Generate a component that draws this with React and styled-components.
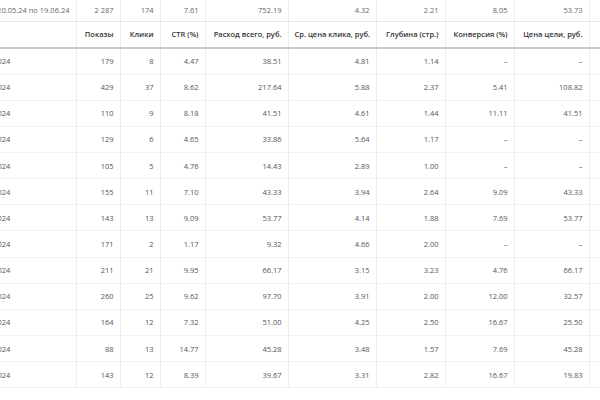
import React from "react";
import styled, { createGlobalStyle } from "styled-components";

const Global = createGlobalStyle`
  html, body { margin: 0; padding: 0; background: #fff; }
  body { font-family: "Open Sans", "Noto Sans", sans-serif; }
`;

const Viewport = styled.div`
  width: 600px;
  height: 400px;
  overflow: hidden;
  background: #fff;
`;

const Table = styled.table`
  border-collapse: collapse;
  table-layout: fixed;
  margin-left: -36px;
  width: 725px;
  font-size: 7.5px;
  color: #555;
`;

const Col = styled.col`
  width: ${(p) => p.$w}px;
`;

const Cell = styled.td`
  padding: 0 6px 0 ${(p) => (p.$left ? "8px" : "6px")};
  text-align: ${(p) => (p.$left ? "left" : "right")};
  border-right: 1px solid #efefef;
  border-bottom: 1px solid #f2f2f2;
  white-space: nowrap;
  overflow: hidden;
`;

const TotalRow = styled.tr`
  height: 21px;
  td { border-bottom: 1px solid #e6e6e6; color: #666; }
`;

const HeadRow = styled.tr`
  height: 27px;
`;

const HeadCell = styled.th`
  padding: 0 6px 0 ${(p) => (p.$left ? "8px" : "6px")};
  text-align: ${(p) => (p.$left ? "left" : "right")};
  font-weight: 600;
  color: #333;
  border-right: 1px solid #efefef;
  border-bottom: 2px solid #c8c8c8;
  white-space: nowrap;
  overflow: hidden;
`;

const DataRow = styled.tr`
  height: 26.15px;
`;

const widths = [112, 44, 40, 45, 83, 88, 69, 69, 75, 100];

const headers = [
  "Дата,",
  "Показы",
  "Клики",
  "CTR (%)",
  "Расход всего, руб.",
  "Ср. цена клика, руб.",
  "Глубина (стр.)",
  "Конверсия (%)",
  "Цена цели, руб.",
  "",
];

const totals = ["20.05.24 по 19.06.24", "2 287", "174", "7.61", "752.19", "4.32", "2.21", "8.05", "53.73", ""];

const rows = [
  ["20.05.2024", "179", "8", "4.47", "38.51", "4.81", "1.14", "–", "–"],
  ["21.05.2024", "429", "37", "8.62", "217.64", "5.88", "2.37", "5.41", "108.82"],
  ["22.05.2024", "110", "9", "8.18", "41.51", "4.61", "1.44", "11.11", "41.51"],
  ["23.05.2024", "129", "6", "4.65", "33.86", "5.64", "1.17", "–", "–"],
  ["24.05.2024", "105", "5", "4.76", "14.43", "2.89", "1.00", "–", "–"],
  ["25.05.2024", "155", "11", "7.10", "43.33", "3.94", "2.64", "9.09", "43.33"],
  ["26.05.2024", "143", "13", "9.09", "53.77", "4.14", "1.88", "7.69", "53.77"],
  ["27.05.2024", "171", "2", "1.17", "9.32", "4.66", "2.00", "–", "–"],
  ["28.05.2024", "211", "21", "9.95", "66.17", "3.15", "3.23", "4.76", "66.17"],
  ["29.05.2024", "260", "25", "9.62", "97.70", "3.91", "2.00", "12.00", "32.57"],
  ["30.05.2024", "164", "12", "7.32", "51.00", "4.25", "2.50", "16.67", "25.50"],
  ["31.05.2024", "88", "13", "14.77", "45.28", "3.48", "1.57", "7.69", "45.28"],
  ["01.06.2024", "143", "12", "8.39", "39.67", "3.31", "2.82", "16.67", "19.83"],
];

export default function App() {
  return (
    <Viewport>
      <Global />
      <Table>
        <colgroup>
          {widths.map((w, i) => (
            <Col key={i} $w={w} />
          ))}
        </colgroup>
        <tbody>
          <TotalRow>
            {totals.map((t, i) => (
              <Cell key={i}>{t}</Cell>
            ))}
          </TotalRow>
          <HeadRow>
            {headers.map((h, i) => (
              <HeadCell key={i} $left={i === 0}>
                {h}
              </HeadCell>
            ))}
          </HeadRow>
          {rows.map((r, ri) => (
            <DataRow key={ri}>
              {r.map((c, ci) => (
                <Cell key={ci} $left={ci === 0}>
                  {c}
                </Cell>
              ))}
              <Cell />
            </DataRow>
          ))}
        </tbody>
      </Table>
    </Viewport>
  );
}
